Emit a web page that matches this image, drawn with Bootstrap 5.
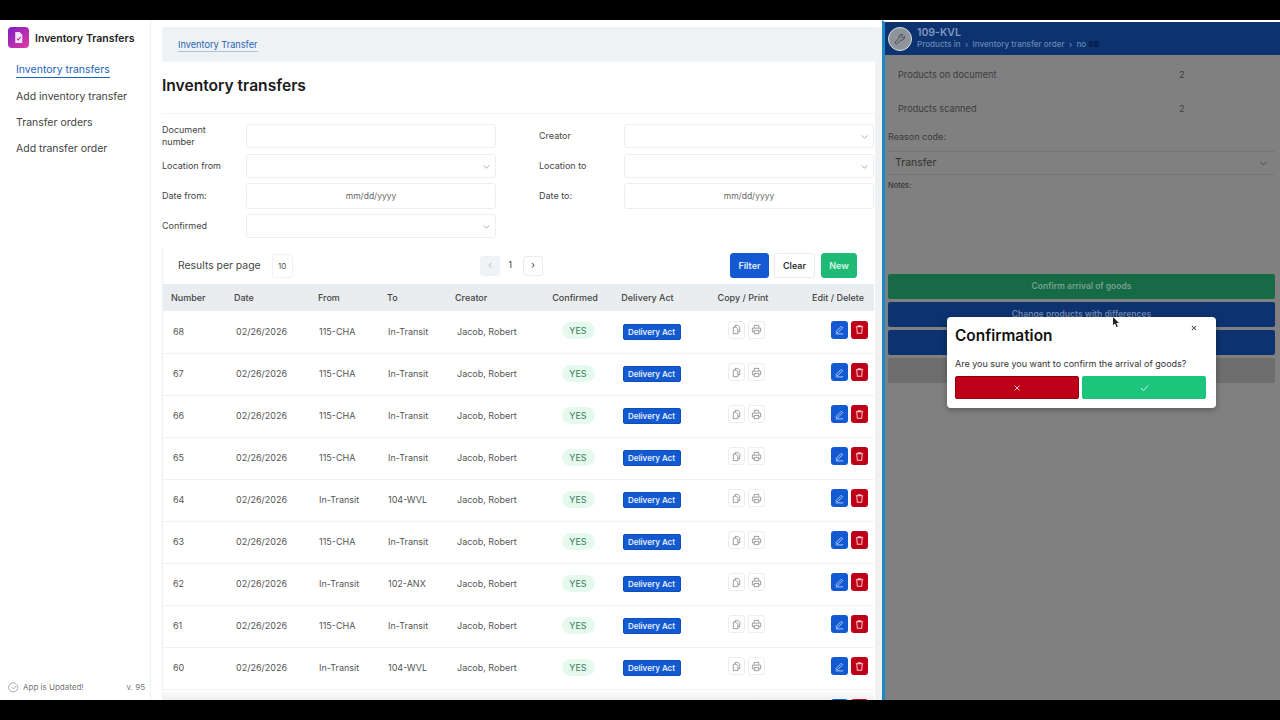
<!DOCTYPE html>
<html lang="en">
<head>
  <meta charset="UTF-8">
  <title>Inventory Transfers</title>
  <link href="https://cdn.jsdelivr.net/npm/bootstrap@5.3.3/dist/css/bootstrap.min.css" rel="stylesheet" />
  <style>
    html, body { height: 720px; overflow: hidden; }
    body { background: #000; font-family: Inter, "Liberation Sans", sans-serif; font-size: 9px; color: #333; padding: 20px 0; }
    .stage { height: 680px; background: #fff; overflow: hidden; }

    /* left side */
    .side { width: 151px; border-right: 1px solid #eef0f1; padding: 7px 0 7px 8px; }
    .app-logo { width: 21px; height: 21px; border-radius: 4px; background: linear-gradient(135deg, #7c1fc4, #e23aa0); }
    .app-name { font-size: 10.5px; font-weight: 600; color: #222; margin-left: 6px; position: relative; top: 1px; }
    .side-nav a { display: block; width: fit-content; margin: 0 0 11px 8px; font-size: 10.5px; line-height: 15px; color: #444; text-decoration: none; }
    .side-nav { margin-top: 15px; }
    .side-nav a.active { color: #1c62b9; border-bottom: 1px solid #1c62b9; line-height: 14px; }
    .side-foot { font-size: 8px; color: #777; padding-right: 5px; }

    .main { width: 731px; padding: 7px 0 0 11px; }
    .crumb { height: 35px; background: #eff2f4; border-radius: 3px; padding-left: 16px; font-size: 9.2px; line-height: 35px; }
    .crumb a { color: #2a65b5; text-decoration: none; border-bottom: 1px solid #a9c2e2; padding-bottom: 1px; }
    .page-title { font-size: 15.6px; font-weight: 600; color: #1a1a1a; margin: 15px 0 0; line-height: 18px; padding-bottom: 18px; border-bottom: 1px solid #f3f4f5; }

    .filters { display: grid; grid-template-columns: 84px 250px 43px 85px 250px; grid-auto-rows: 24px; row-gap: 6px; margin-top: 10px; font-size: 9px; line-height: 12px; color: #444; align-items: center; }
    .filters .form-control, .filters .form-select { height: 24px; min-height: 0; font-size: 8.5px; padding: 0 8px; border-color: #eceff1; border-radius: 3px; color: #555; }
    .filters .form-select { background-image: url("data:image/svg+xml,%3csvg xmlns='http://www.w3.org/2000/svg' viewBox='0 0 12 12'%3e%3cpath fill='none' stroke='%23888' stroke-width='1.2' d='M1 4l5 5 5-5'/%3e%3c/svg%3e"); background-size: 7px 7px; background-position: right 5px center; }
    .filters .form-control::placeholder { color: #666; }
    .filters .date { height: 26px; margin: -1px 0; text-align: center; }

    .list-box { margin-top: 9px; border-left: 1px solid #eef1f3; }
    .tools { height: 37px; padding: 0 18px 0 15px; }
    .tools .per-page { font-size: 10.4px; color: #444; margin-right: 11px; }
    .per-box { width: 21px; height: 24px; border: 1px solid #eff1f2; border-radius: 3px; font-size: 8px; color: #555; }
    .pager { margin-left: auto; margin-right: 187px; font-size: 9.5px; color: #444; }
    .pg-num { margin: 0 11px 0 8px; }
    .pg-btn { width: 20px; height: 20px; border: 1px solid #e9ecee; border-radius: 3px; color: #333; }
    .pg-btn.off { background: #f0f3f5; border-color: #f0f3f5; color: #b8c0c6; }
    .tools .btn { height: 25px; font-size: 9px; font-weight: 600; padding: 0; border-radius: 3px; }
    .btn-filter { width: 39px; background: #1259d2; border-color: #1259d2; color: #e4eefc; }
    .btn-clear { width: 41px; border: 1px solid #e9ecee; color: #333; margin-left: 5px; }
    .btn-new { width: 36px; background: #1dbb76; border-color: #1dbb76; color: #d7f7e7; margin-left: 6px; }

    .transfers { width: 711px; table-layout: fixed; margin: 0; font-size: 9px; color: #555; }
    .transfers th { height: 27px; padding: 0; background: #e9edef; font-weight: 500; color: #444; vertical-align: middle; border: 0; }
    .transfers td { height: 42px; padding: 0; vertical-align: middle; border-bottom: 1px solid #eff1f2; color: #555; }
    .transfers th:nth-child(1) { width: 62px; padding-left: 8px; }
    .transfers td:nth-child(1) { padding-left: 10px; }
    .transfers th:nth-child(2) { width: 84px; padding-left: 9px; }
    .transfers td:nth-child(2) { padding-left: 11px; }
    .transfers th:nth-child(3) { width: 69px; padding-left: 9px; }
    .transfers td:nth-child(3) { padding-left: 10px; }
    .transfers th:nth-child(4) { width: 68px; padding-left: 9px; }
    .transfers td:nth-child(4) { padding-left: 10px; }
    .transfers th:nth-child(5) { width: 97px; padding-left: 9px; }
    .transfers td:nth-child(5) { padding-left: 11px; }
    .transfers th:nth-child(6) { width: 64px; }
    .transfers td:nth-child(6) { padding-left: 6px; padding-bottom: 2px; }
    .transfers td:nth-child(7) { padding-left: 8px; }
    .transfers th:nth-child(7) { width: 81px; }
    .transfers th:nth-child(8) { width: 110px; }
    .transfers td:nth-child(8) { padding-left: 7px; padding-bottom: 2px; }
    .transfers th:nth-child(9), .transfers td:nth-child(9) { text-align: right; }
    .transfers th:nth-child(9) { padding-right: 10px; }
    .transfers td:nth-child(9) { padding-right: 6px; padding-bottom: 2px; }
    .transfers tr.peek td { background: linear-gradient(#fff, #eceeef 11px); border: 0; }
    .yes { display: inline-block; width: 33px; height: 17px; line-height: 17px; border-radius: 9px; background: #e6f9ef; color: #3a7d5c; font-size: 9px; vertical-align: middle; }
    .act { display: inline-block; width: 58px; height: 16px; line-height: 14px; border: 1px solid #0e4fb8; border-radius: 2px; background: #1259d2; color: #e4eefc; font-size: 8px; font-weight: 600; vertical-align: middle; }
    .ic { display: inline-flex; align-items: center; justify-content: center; width: 17px; height: 18px; border-radius: 3px; vertical-align: middle; position: relative; top: -1px; }
    .ic-line { border: 1px solid #eceeef; color: #888; margin: 0 1.5px; }
    .ic-blue { background: #1259d2; color: #bcd5fa; }
    .ic-red { background: #bd0017; color: #f5c6cc; margin-left: 3px; }
    .scroll-rail { width: 7px; background: #f0f1f2; }

    /* scanner panel, dimmed behind the dialog */
    .scanner { flex: 1; position: relative; background: #808080; border-left: 3px solid #1d86c9; border-top: 2px solid #fff; color: #3a3a3a; }
    .scan-head { height: 33px; background: #0d3270; padding-left: 3px; margin-bottom: 3px; }
    .scan-logo { width: 24px; height: 24px; border-radius: 50%; background: #8f939a; border: 1px solid #d8dce3; color: #3f4650; margin-right: 5px; }
    .scan-code { font-size: 10.5px; font-weight: 600; line-height: 12px; color: #7f97bd; }
    .scan-path { font-size: 8.1px; font-weight: 500; line-height: 11px; color: #6a87b4; }
    .scan-path b { color: #061a40; font-weight: 700; }
    .count-row { height: 34px; padding-left: 13px; font-size: 9.2px; color: #3d3d3d; }
    .count-row span:first-child { width: 281px; }
    .reason-label { font-size: 9px; margin: 5px 0 0 3px; line-height: 12px; }
    .reason { height: 24px; margin: 8px 5px 0 3px; padding: 0 7px; border-top: 1px solid #757575; border-bottom: 1px solid #757575; font-size: 10.5px; color: #333; }
    .notes-label { font-size: 7.5px; font-weight: 500; margin: 6px 0 0 3px; line-height: 10px; }
    .scan-btns { margin: 83px 5px 0 3px; }
    .scan-btn { height: 25px; margin-bottom: 3px; border-radius: 2px; font-size: 8.5px; font-weight: 600; }
    .scan-green { background: #176a46; color: #75a38c; }
    .scan-blue { background: #0d3270; color: #6f86ad; }
    .scan-grey { background: #6e6e6e; }

    .confirm { position: absolute; left: 62px; top: 295px; width: 269px; height: 91px; padding: 10px 8px; background: #fff; border: 0; border-radius: 4px; box-shadow: 0 2px 6px rgba(0,0,0,.3); }
    .confirm .modal-title { font-size: 15.4px; font-weight: 600; line-height: 18px; color: #111; margin: 0; }
    .confirm p { font-size: 9px; line-height: 12px; color: #333; margin: 13px 0 6px; }
    .confirm .btn-close { position: absolute; right: 19px; top: 8px; width: 6px; height: 6px; padding: 0; background-size: 6px; opacity: .8; }
    .confirm-actions { gap: 3px; }
    .confirm .btn { height: 23px; padding: 0; border-radius: 2px; width: 124px; display: flex; align-items: center; justify-content: center; }
    .btn-no { background: #bd0017; border-color: #8e0012; color: #f6c7cd; }
    .btn-yes { background: #1dc47b; border-color: #1dc47b; color: #c9f3de; }
    .pointer { position: absolute; left: 227px; top: 295px; }
  </style>
</head>
<body>
  <svg width="0" height="0" class="position-absolute">
    <symbol id="i-copy" viewBox="0 0 12 12"><path d="M4.500 3.500V1.500h3l2 2v5h-2M2.500 3.500h3l2 2v5h-5z" fill="none" stroke="currentColor" stroke-width=".9"/></symbol>
    <symbol id="i-print" viewBox="0 0 12 12"><path d="M3.500 4V1.500h5V4M3.500 8.500H1.500V4.500h9v4h-2M3.500 7h5v3.500h-5z" fill="none" stroke="currentColor" stroke-width=".9"/></symbol>
    <symbol id="i-pen" viewBox="0 0 12 12"><path d="M2.500 8l5.500-5.500 1.500 1.500L4 9.500H2.500zM2 10.800h8" fill="none" stroke="currentColor" stroke-width="1"/></symbol>
    <symbol id="i-trash" viewBox="0 0 12 12"><path d="M2 3h8M4.500 3V1.800h3V3M3 3l.6 7.200h4.800L9 3" fill="none" stroke="currentColor" stroke-width="1.100"/></symbol>
  </svg>

  <div class="stage d-flex">
    <div class="side d-flex flex-column flex-shrink-0">
      <div class="d-flex align-items-center">
        <div class="app-logo d-flex align-items-center justify-content-center">
          <svg width="13" height="13" viewBox="0 0 12 12"><path d="M3 1h4l2.500 2.500V11H3z" fill="#f6e3fb"/><path d="M4.500 7l1.200 1.300L8 5.500" fill="none" stroke="#b02cb8" stroke-width="1"/></svg>
        </div>
        <span class="app-name">Inventory Transfers</span>
      </div>
      <nav class="side-nav">
        <a href="#" class="active">Inventory transfers</a>
        <a href="#">Add inventory transfer</a>
        <a href="#">Transfer orders</a>
        <a href="#">Add transfer order</a>
      </nav>
      <div class="side-foot mt-auto d-flex align-items-center">
        <svg width="11" height="11" viewBox="0 0 12 12" class="me-1"><path d="M10.500 4.500A5 5 0 1 1 8.500 1.700M4 5.500l2 2 4.500-5" fill="none" stroke="#888" stroke-width=".8"/></svg>
        <span>App is Updated!</span>
        <span class="ms-auto">v. 95</span>
      </div>
    </div>

    <div class="main flex-shrink-0 d-flex">
      <div class="flex-grow-1 overflow-hidden">
        <div class="crumb"><a href="#">Inventory Transfer</a></div>
        <h1 class="page-title">Inventory transfers</h1>

        <div class="filters">
          <label>Document<br>number</label>
          <input class="form-control" type="text">
          <span></span>
          <label>Creator</label>
          <select class="form-select"><option></option></select>

          <label>Location from</label>
          <select class="form-select"><option></option></select>
          <span></span>
          <label>Location to</label>
          <select class="form-select"><option></option></select>

          <label>Date from:</label>
          <input class="form-control date" type="text" placeholder="mm/dd/yyyy">
          <span></span>
          <label>Date to:</label>
          <input class="form-control date" type="text" placeholder="mm/dd/yyyy">

          <label>Confirmed</label>
          <select class="form-select"><option></option></select>
        </div>

        <div class="list-box">
          <div class="tools d-flex align-items-center">
            <span class="per-page">Results per page</span>
            <span class="per-box d-flex align-items-center justify-content-center">10</span>
            <div class="pager d-flex align-items-center">
              <span class="pg-btn off d-flex align-items-center justify-content-center">&#8249;</span>
              <span class="pg-num">1</span>
              <span class="pg-btn d-flex align-items-center justify-content-center">&#8250;</span>
            </div>
            <button class="btn btn-filter">Filter</button>
            <button class="btn btn-clear">Clear</button>
            <button class="btn btn-new">New</button>
          </div>
          <table class="table transfers">
            <thead>
              <tr>
                <th>Number</th><th>Date</th><th>From</th><th>To</th><th>Creator</th>
                <th class="text-center">Confirmed</th><th class="text-center">Delivery Act</th>
                <th class="text-center">Copy / Print</th><th>Edit / Delete</th>
              </tr>
            </thead>
            <tbody id="rows"></tbody>
          </table>
        </div>
      </div>
      <div class="scroll-rail flex-shrink-0"></div>
    </div>

    <div class="scanner">
      <div class="scan-head d-flex align-items-center">
        <div class="scan-logo d-flex align-items-center justify-content-center">
          <svg width="12" height="12" viewBox="0 0 12 12"><path d="M10.500 3.200L8.700 5l-1.700-1.700L8.800 1.500A3 3 0 0 0 5 5.200L1.500 8.800a1.200 1.200 0 0 0 1.700 1.700L6.800 7a3 3 0 0 0 3.700-3.800z" fill="none" stroke="currentColor" stroke-width=".9"/></svg>
        </div>
        <div>
          <div class="scan-code">109-KVL</div>
          <div class="scan-path">Products in &nbsp;&#8250;&nbsp; Inventory transfer order &nbsp;&#8250;&nbsp; no <b>68</b></div>
        </div>
      </div>
      <div class="count-row d-flex align-items-center"><span>Products on document</span><span>2</span></div>
      <div class="count-row d-flex align-items-center"><span>Products scanned</span><span>2</span></div>
      <div class="reason-label">Reason code:</div>
      <div class="reason d-flex align-items-center justify-content-between">
        <span>Transfer</span>
        <svg width="9" height="9" viewBox="0 0 12 12"><path d="M2 4l4 4 4-4" fill="none" stroke="#3a3a3a" stroke-width="1"/></svg>
      </div>
      <div class="notes-label">Notes:</div>
      <div class="scan-btns">
        <div class="scan-btn scan-green d-flex align-items-center justify-content-center">Confirm arrival of goods</div>
        <div class="scan-btn scan-blue d-flex align-items-center justify-content-center">Change products with differences</div>
        <div class="scan-btn scan-blue"></div>
        <div class="scan-btn scan-grey"></div>
      </div>

      <div class="modal-content confirm">
        <button type="button" class="btn-close" aria-label="Close"></button>
        <h5 class="modal-title">Confirmation</h5>
        <p>Are you sure you want to confirm the arrival of goods?</p>
        <div class="d-flex confirm-actions">
          <button class="btn btn-no"><svg width="8" height="8" viewBox="0 0 8 8"><path d="M1.500 1.500l5 5M6.500 1.500l-5 5" stroke="currentColor" stroke-width="1"/></svg></button>
          <button class="btn btn-yes"><svg width="9" height="8" viewBox="0 0 9 8"><path d="M1 4l2.500 2.500L8 1.500" fill="none" stroke="currentColor" stroke-width="1"/></svg></button>
        </div>
      </div>
      <svg class="pointer" width="8" height="11" viewBox="0 0 8 11"><path d="M1 0v8l2-1.500L4.500 10l1.300-.6L4.300 6H7z" fill="#222"/></svg>
    </div>
  </div>

  <script>
    const transfers = [
      [68, '115-CHA', 'In-Transit'],
      [67, '115-CHA', 'In-Transit'],
      [66, '115-CHA', 'In-Transit'],
      [65, '115-CHA', 'In-Transit'],
      [64, 'In-Transit', '104-WVL'],
      [63, '115-CHA', 'In-Transit'],
      [62, 'In-Transit', '102-ANX'],
      [61, '115-CHA', 'In-Transit'],
      [60, 'In-Transit', '104-WVL']
    ];
    const icon = name => `<svg width="11" height="11"><use href="#i-${name}"/></svg>`;
    const copyPrint = `<span class="ic ic-line">${icon('copy')}</span><span class="ic ic-line">${icon('print')}</span>`;
    const editDelete = `<span class="ic ic-blue">${icon('pen')}</span><span class="ic ic-red">${icon('trash')}</span>`;
    // the next row only just shows at the bottom edge, so it carries its buttons and no text
    document.getElementById('rows').innerHTML = transfers.map(t => `
      <tr>
        <td>${t[0]}</td><td>02/26/2026</td><td>${t[1]}</td><td>${t[2]}</td><td>Jacob, Robert</td>
        <td class="text-center"><span class="yes">YES</span></td>
        <td class="text-center"><span class="act">Delivery Act</span></td>
        <td class="text-center">${copyPrint}</td>
        <td>${editDelete}</td>
      </tr>`).join('') + `
      <tr class="peek"><td></td><td></td><td></td><td></td><td></td><td></td><td></td>
        <td class="text-center">${copyPrint}</td><td>${editDelete}</td></tr>`;
  </script>
  <script src="https://cdn.jsdelivr.net/npm/bootstrap@5.3.3/dist/js/bootstrap.bundle.min.js"></script>
</body>
</html>
